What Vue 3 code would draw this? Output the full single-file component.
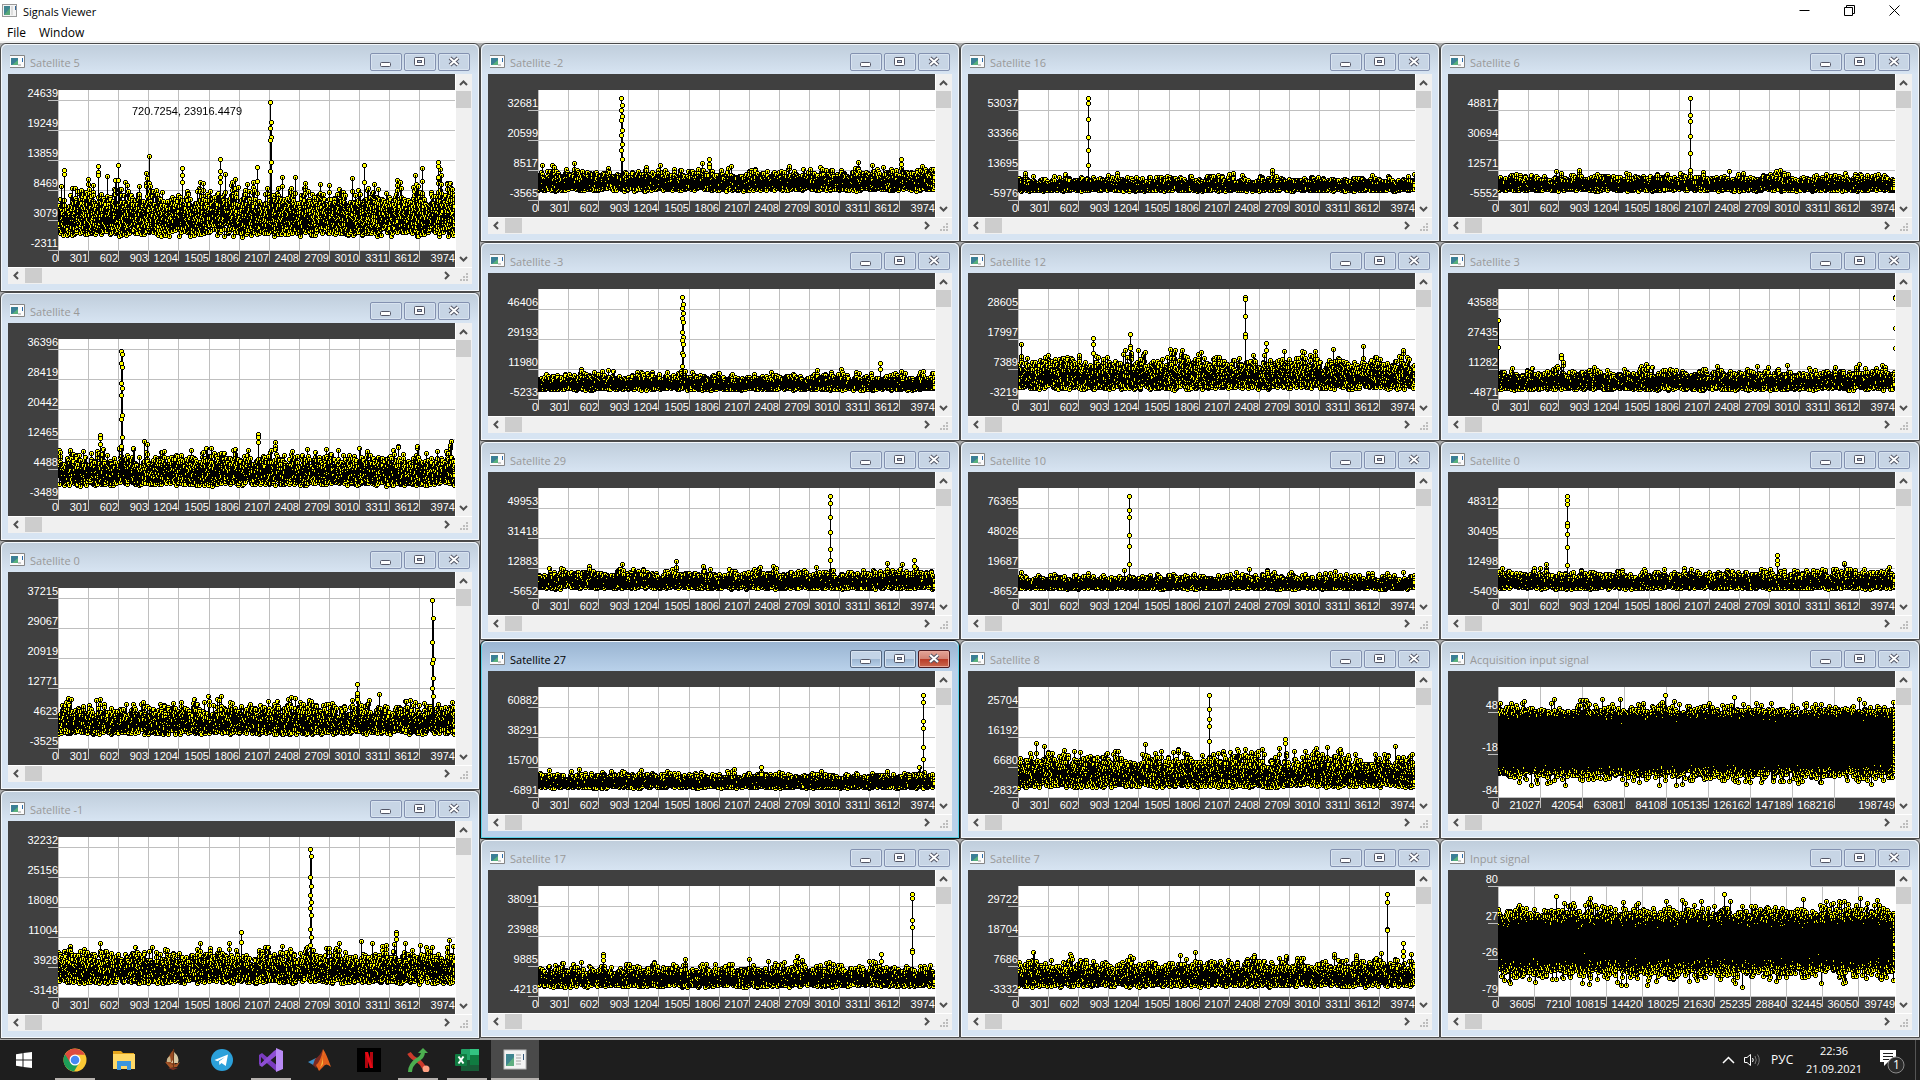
<script setup>
import { onBeforeUnmount, onMounted, ref } from 'vue'

const TALL = 193
const SHORT = 143

const satellite = (title, yLabels, spread, peaks, extra = {}) => ({
  title, yLabels, spread, peaks,
  step: 30, xStep: 301, xCount: 13, last: '3974', kind: 'noise',
  height: yLabels.length > 4 ? TALL : SHORT,
  floor: yLabels.length > 4 ? 13 : 9,
  ...extra,
})

// peaks: [x offset, marker heights above the axis]
const columns = [
  [
    satellite('Satellite 5', [-2311, 3079, 8469, 13859, 19249, 24639], 17,
      [[212, [148, 128, 122, 113, 110, 88, 79]], [162, [91, 79, 73, 68]], [6, [80, 76]], [40, [84, 78, 75]], [60, [85, 70]], [199, [83, 69]], [306, [85, 68]], [380, [88, 84, 73]], [124, [82, 75, 68]]],
      { note: '720.7254, 23916.4479' }),
    satellite('Satellite 4', [-3489, 4488, 12465, 20442, 28419, 36396], 11,
      [[63, [148, 145, 136, 132, 116, 111, 104, 84, 80, 62, 53]], [42, [64, 61, 55]], [200, [65, 62, 57]]]),
    satellite('Satellite 0', [-3525, 4623, 12771, 20919, 29067, 37215], 10.5,
      [[374, [148, 130, 106, 89, 85, 70, 60, 52]], [299, [64, 55, 49]]]),
    satellite('Satellite -1', [-3148, 3928, 11004, 18080, 25156, 32232], 11.5,
      [[252, [148, 141, 120, 111, 102, 95, 89, 82, 68, 60, 52]], [183, [65, 55]], [338, [65, 63, 58]]]),
  ],
  [
    satellite('Satellite -2', [-3565, 8517, 20599, 32681], 7.2,
      [[83, [102, 95, 90, 84, 80, 70, 65, 56, 50, 41]], [171, [41, 36, 33]], [363, [41, 36]]]),
    satellite('Satellite -3', [-5233, 11980, 29193, 46406], 5.3,
      [[144, [102, 95, 91, 86, 81, 77, 67, 62, 59, 55, 46, 44, 33]], [342, [36, 30]]]),
    satellite('Satellite 29', [-5652, 12883, 31418, 49953], 6.2,
      [[292, [102, 95, 81, 66, 49, 38]], [376, [38, 32]]]),
    satellite('Satellite 27', [-6891, 15700, 38291, 60882], 5,
      [[385, [102, 95, 76, 69, 50, 38]], [223, [30, 23]]], { active: true }),
    satellite('Satellite 17', [-4218, 9885, 23988, 38091], 7.4,
      [[374, [102, 98, 76, 69, 46, 44]], [65, [42, 40, 36]], [343, [42, 35]]]),
  ],
  [
    satellite('Satellite 16', [-5976, 13695, 33366, 53037], 4.6,
      [[70, [102, 97, 81, 63, 50, 35]]]),
    satellite('Satellite 12', [-3219, 7389, 17997, 28605], 11,
      [[227, [102, 100, 83, 65, 62]], [75, [61, 55, 46]], [112, [65, 53, 51]], [248, [56, 49]]]),
    satellite('Satellite 10', [-8652, 19687, 48026, 76365], 4.6,
      [[111, [102, 88, 81, 63, 52, 34]]]),
    satellite('Satellite 8', [-2832, 6680, 16192, 25704], 11.5,
      [[191, [102, 88, 78, 71, 56]], [267, [58, 54]]]),
    satellite('Satellite 7', [-3332, 7686, 18704, 29722], 9,
      [[369, [102, 94, 67, 66]], [385, [53, 45, 40]]]),
  ],
  [
    satellite('Satellite 6', [-5552, 12571, 30694, 48817], 5.3,
      [[192, [102, 85, 79, 64, 47, 30]]]),
    satellite('Satellite 3', [-4871, 11282, 27435, 43588], 7,
      [[0, [79, 52]], [397, [102, 101, 71, 51]], [63, [44, 41]]]),
    satellite('Satellite 0', [-5409, 12498, 30405, 48312], 6,
      [[69, [102, 98, 94, 75, 72, 64]], [69, [51, 33]], [279, [43, 38, 34]]]),
    satellite('Acquisition input signal', [-84, -18, 48], 10.5, [[167, [102]], [236, [100]]],
      { height: SHORT, step: 42, xStep: 21027, xCount: 9, last: '198749', kind: 'band', centre: 55, samples: 160000 }),
    satellite('Input signal', [-79, -26, 27, 80], 11.5, [[226, [102]], [58, [100]]],
      { step: 36, xStep: 3605, xCount: 11, last: '39749', kind: 'band', centre: 54, samples: 40000 }),
  ],
]

const LEFT = 50
const TOP = 16
const axisY = (w) => w.height - 17
const tickX = (w, i) => LEFT + Math.round(i * (w.step === 30 ? 30.1 : w.step))
const tickY = (w, i) => axisY(w) - Math.round(i * (w.step === 36 ? 36.7 : w.step === 42 ? 42.5 : 30))

function generator(seed) {
  let s = seed
  const uniform = () => {
    s = (s + 0x6d2b79f5) | 0
    let t = Math.imul(s ^ (s >>> 15), 1 | s)
    t = (t + Math.imul(t ^ (t >>> 7), 61 | t)) ^ t
    return ((t ^ (t >>> 14)) >>> 0) / 4294967296
  }
  return () => Math.sqrt(-2 * Math.log(uniform() + 1e-9)) * Math.cos(6.2831853 * uniform())
}

function draw(canvas, w, seed) {
  const width = canvas.parentElement.clientWidth
  canvas.width = width
  canvas.height = w.height
  const g = canvas.getContext('2d')
  const base = axisY(w)
  const normal = generator(seed)
  g.beginPath()
  g.rect(LEFT, TOP, width - LEFT, base - TOP)
  g.clip()

  const marker = (x, y) => {
    g.fillStyle = '#000'
    g.fillRect(x - 1, y - 2, 3, 5)
    g.fillRect(x - 2, y - 1, 5, 3)
    g.fillStyle = '#ff0'
    g.fillRect(x - 1, y - 1, 3, 3)
  }
  const stroke = (x, a, b) => {
    g.fillStyle = '#000'
    g.fillRect(x, Math.min(a, b), 1, Math.abs(a - b) + 1)
  }

  const count = w.kind === 'band' ? w.samples : 4000
  const span = width - LEFT
  const walk = [normal(), normal()]
  let previous = null
  for (let i = 0; i < count; i++) {
    const x = LEFT + Math.floor((i / count) * span)
    let h
    if (w.kind === 'band') {
      h = w.centre + w.spread * Math.max(-4.1, Math.min(4.1, normal()))
    } else {
      walk[0] = walk[0] * 0.6 + normal() * 0.8
      walk[1] = walk[1] * 0.6 + normal() * 0.8
      h = w.floor + w.spread * Math.hypot(walk[0], walk[1])
    }
    const y = Math.round(base - h)
    if (previous !== null) stroke(x, previous, y)
    marker(x, y)
    previous = y
  }
  for (const [dx, heights] of w.peaks) {
    const x = LEFT + dx
    const wide = heights.length > 6
    const foot = base - (w.kind === 'band' ? w.centre : w.floor + w.spread)
    if (dx < 397) stroke(x, base - heights[0], Math.round(foot))
    if (wide) stroke(x + 1, base - heights[1], Math.round(foot))
    heights.forEach((h, k) => marker(x + (wide ? k % 2 : 0), base - h))
  }
}

const desk = ref(null)
let observer
function drawAll() {
  const flat = columns.flat()
  desk.value.querySelectorAll('canvas').forEach((c, i) => draw(c, flat[i], 17 + i * 101))
}
onMounted(() => {
  drawAll()
  observer = new ResizeObserver(drawAll)
  observer.observe(desk.value)
})
onBeforeUnmount(() => observer.disconnect())

const apps = [
  { id: 'chrome', name: 'Chrome', open: true },
  { id: 'files', name: 'Explorer' },
  { id: 'ship', name: 'Ship' },
  { id: 'telegram', name: 'Telegram' },
  { id: 'vs', name: 'Visual Studio', open: true },
  { id: 'matlab', name: 'Matlab' },
  { id: 'netflix', name: 'Netflix' },
  { id: 'xing', name: 'Plotter', open: true },
  { id: 'excel', name: 'Excel', open: true },
  { id: 'viewer', name: 'Signals Viewer', open: true, current: true },
]
</script>

<template>
  <div class="page">
    <header class="caption">
      <svg class="app-icon" width="16" height="14" viewBox="0 0 16 14">
        <rect x="0.5" y="0.5" width="14" height="12" fill="#f4f4f4" stroke="#999" />
        <rect x="2" y="2" width="6" height="9" fill="#3f8590" />
        <path d="M2 11L8 4V11Z" fill="#58a878" />
        <rect x="9" y="2" width="2" height="9" fill="#ddd" />
        <rect x="13" y="2" width="1" height="4" fill="#369" />
      </svg>
      <h1>Signals Viewer</h1>
      <div class="caption-buttons">
        <button aria-label="Minimize"><svg width="11" height="11"><path d="M0.5 5.5H10.5" stroke="#000" /></svg></button>
        <button aria-label="Restore">
          <svg width="11" height="11" fill="none" stroke="#000"><path d="M0.5 2.5H8.5V10.5H0.5ZM2.5 2.5V0.5H10.5V8.5H8.5" /></svg>
        </button>
        <button aria-label="Close"><svg width="11" height="11"><path d="M0.5 0.5L10.5 10.5M10.5 0.5L0.5 10.5" stroke="#000" /></svg></button>
      </div>
    </header>
    <nav class="menu">
      <button>File</button>
      <button>Window</button>
    </nav>

    <main ref="desk" class="desk">
      <div v-for="(column, c) in columns" :key="c" class="column">
        <section v-for="w in column" :key="w.title" class="window" :class="{ active: w.active }">
          <header class="bar">
            <svg class="app-icon" width="16" height="14" viewBox="0 0 16 14">
              <rect x="0" y="1" width="14" height="11" fill="#fbfbfb" />
              <path d="M0 0.5H14.5V12.5H0" fill="none" stroke="#858585" />
              <rect x="1" y="3" width="7" height="7" fill="#3b7f95" />
              <path d="M2 10L8 5V10Z" fill="#58b07c" />
              <rect x="8" y="9" width="3" height="2" fill="#ccc" />
              <rect x="12" y="3" width="1" height="4" fill="#2b6cab" />
            </svg>
            <h2>{{ w.title }}</h2>
            <div class="bar-buttons">
              <button aria-label="Minimize">
                <svg width="12" height="12"><rect x="0.5" y="6.5" width="10" height="4" rx="1" fill="#fff" stroke="#535666" /></svg>
              </button>
              <button aria-label="Maximize">
                <svg width="12" height="12" stroke="#535666"><rect x="0.5" y="1.5" width="10" height="8" rx="1" fill="#fff" /><rect x="3.5" y="4.5" width="4" height="2" fill="#b5c6dd" /></svg>
              </button>
              <button aria-label="Close" class="close">
                <svg width="12" height="12"><path d="M2 2L10 9M10 2L2 9" stroke="#535666" stroke-width="4" /><path d="M2 2L10 9M10 2L2 9" stroke="#fff" stroke-width="2" /></svg>
              </button>
            </div>
          </header>
          <div class="client">
            <div class="row">
              <figure class="chart">
                <svg width="100%" :height="w.height" shape-rendering="crispEdges">
                  <rect :x="LEFT" :y="TOP" width="100%" :height="axisY(w) - TOP" fill="#fff" />
                  <g fill="#bfbfbf">
                    <rect v-for="(l, i) in w.yLabels" :key="'h' + i" x="40" :y="tickY(w, i)" width="100%" height="1" />
                    <rect v-for="i in w.xCount" :key="'v' + i" :x="tickX(w, i - 1)" :y="TOP" width="1" :height="axisY(w) - TOP + 11" />
                  </g>
                  <g class="labels">
                    <text v-for="(l, i) in w.yLabels" :key="'y' + i" :x="LEFT" :y="tickY(w, i) - 3">{{ l }}</text>
                    <text v-for="i in w.xCount" :key="'x' + i" :x="tickX(w, i - 1)" :y="axisY(w) + 12">{{ (i - 1) * w.xStep }}</text>
                    <text x="100%" :y="axisY(w) + 12">{{ w.last }}</text>
                  </g>
                </svg>
                <canvas></canvas>
                <figcaption v-if="w.note">{{ w.note }}</figcaption>
              </figure>
              <div class="vscroll">
                <button aria-label="Scroll up"><svg width="9" height="6"><path d="M1 5L4.500 1.500L8 5" /></svg></button>
                <i></i>
                <button class="end" aria-label="Scroll down"><svg width="9" height="6"><path d="M1 1L4.500 4.500L8 1" /></svg></button>
              </div>
            </div>
            <div class="hscroll">
              <button aria-label="Scroll left"><svg width="6" height="9"><path d="M5 1L1.500 4.500L5 8" /></svg></button>
              <i></i>
              <button class="end" aria-label="Scroll right"><svg width="6" height="9"><path d="M1 1L4.500 4.500L1 8" /></svg></button>
              <svg class="grip" width="17" height="16" fill="#bdbdbd"><path d="M11 5h2v2h-2zM8 8h2v2h-2zM11 8h2v2h-2zM5 11h2v2h-2zM8 11h2v2h-2zM11 11h2v2h-2z" /></svg>
            </div>
          </div>
        </section>
      </div>
    </main>

    <footer class="taskbar">
      <button class="start" aria-label="Start">
        <svg width="16" height="16" fill="#fff"><path d="M0 2.200L6.500 1.300V7.500H0ZM7.500 1.100L16 0V7.500H7.500ZM0 8.500H6.500V14.700L0 13.800ZM7.500 8.500H16V16L7.500 14.900Z" /></svg>
      </button>
      <button v-for="a in apps" :key="a.id" class="task" :class="{ open: a.open, current: a.current }" :aria-label="a.name">
        <svg width="24" height="24" viewBox="0 0 24 24">
          <g v-if="a.id === 'chrome'">
            <circle cx="12" cy="12" r="11.500" fill="#fbc934" />
            <path d="M2 6.300A11.500 11.500 0 0 0 11 23.400L16 15L12 12Z" fill="#1c9e58" />
            <path d="M2 6.300A11.500 11.500 0 0 1 22 6.700H12L7.500 15Z" fill="#dd4b3e" />
            <circle cx="12" cy="12" r="5.500" fill="#fff" /><circle cx="12" cy="12" r="4.300" fill="#4688f4" />
          </g>
          <g v-else-if="a.id === 'files'">
            <path d="M1 3H9L11 5H22V21H1Z" fill="#e5a51c" /><path d="M1 6H23V21H1Z" fill="#ffd966" />
            <path d="M5 22V13H19V22H15V18H9V22Z" fill="#3a96dd" />
          </g>
          <g v-else-if="a.id === 'ship'">
            <path d="M13 1L14 17L5 15Q7 8 13 1Z" fill="#9a4c22" /><path d="M13 4Q19 9 17 15L10 15Q14 10 13 4Z" fill="#d8c9a4" />
            <path d="M9 8Q5 10 6 14L10 14Z" fill="#c9b48a" />
            <path d="M4 14L13 17L19 14L16 19L9 20Z" fill="#a85628" /><path d="M7 20L17 20L12 22Z" fill="#7d2d25" /><path d="M12.500 1V22" stroke="#6e3515" />
          </g>
          <g v-else-if="a.id === 'telegram'">
            <circle cx="12" cy="12" r="11" fill="#2ba0da" /><path d="M4.500 12L18 6.500L15.800 18L11.500 15L9.500 17L9 13.500L15 9L7.500 13.200Z" fill="#fff" />
          </g>
          <g v-else-if="a.id === 'vs'">
            <path d="M0 7L3 5L20 19L17 23L2 10V17L0 16Z" fill="#7b3bc0" /><path d="M0 17L3 19L18 7V1L15 3Z" fill="#8d4ed4" />
            <path d="M17 0L24 3V21L17 24Z" fill="#b98af5" /><path d="M2 9V15L5 12Z" fill="#1e1e1e" />
          </g>
          <g v-else-if="a.id === 'matlab'">
            <path d="M0 14L8 10L12 14L7 18Z" fill="#3d8fc9" /><path d="M7 11Q12 8 15 1L13 15L8 20L5 17Z" fill="#7a2a22" />
            <path d="M15 1Q18 5 23 19Q18 14 15 19L11 23L8 17Q13 13 15 1Z" fill="#e4611d" /><path d="M15 2Q16 10 12 20L15 16Z" fill="#f8b53c" />
          </g>
          <g v-else-if="a.id === 'netflix'">
            <rect width="24" height="24" fill="#000" /><path d="M8 4H11V20H8ZM13 4H16V20H13Z" fill="#b1060f" /><path d="M8 4H11L16 20H13Z" fill="#e50914" />
          </g>
          <g v-else-if="a.id === 'xing'" fill="none" stroke-width="4">
            <path d="M3 5Q6 10 11 12Q16 15 18 20" stroke="#cc3a2c" /><path d="M4 24Q4 17 11 12Q17 9 17 4" stroke="#4caf50" />
            <path d="M12 5L17 0L22 5Z" fill="#4caf50" stroke="none" /><circle cx="20" cy="21" r="3.500" fill="#ffa183" stroke="none" />
          </g>
          <g v-else-if="a.id === 'excel'">
            <rect x="6" y="1" width="18" height="22" rx="1" fill="#21a366" /><path d="M15 1H24V7H15Z" fill="#33c481" /><path d="M6 12H24V23H6Z" fill="#185c37" /><path d="M15 7H24V17H15Z" fill="#107c41" />
            <rect y="6" width="12" height="12" rx="1" fill="#107c41" /><path d="M3.500 8.500L8.500 15.500M8.500 8.500L3.500 15.500" stroke="#fff" stroke-width="2" />
          </g>
          <g v-else>
            <rect x="1" y="2" width="22" height="19" fill="#f3f3f3" stroke="#bbb" /><rect x="3" y="6" width="8" height="12" fill="#3f8590" /><path d="M3 18L11 9V18Z" fill="#5fae80" />
            <path d="M13 7H18M13 10H18M13 13H18M13 16H18" stroke="#ccc" stroke-width="2" /><rect x="20" y="6" width="1" height="6" fill="#357" />
          </g>
        </svg>
      </button>
      <div class="tray">
        <button class="chevron" aria-label="Hidden icons"><svg width="13" height="8" fill="none" stroke="#fff" stroke-width="1.500"><path d="M1 7L6.500 1.500L12 7" /></svg></button>
        <button class="sound" aria-label="Volume">
          <svg width="17" height="14" fill="none" stroke="#fff"><path d="M0.500 4.500H3L6.500 1.500V12.500L3 9.500H0.500Z" /><path d="M8.500 5Q10 7 8.500 9" /><path d="M11 3Q13.500 7 11 11M13.500 1.500Q17 7 13.500 12.500" stroke="#777" /></svg>
        </button>
        <span class="lang">РУС</span>
        <time class="clock"><span>22:36</span><span>21.09.2021</span></time>
        <button class="notes" aria-label="Notifications">
          <svg width="26" height="26"><path d="M1 2H17V14H9L5 18V14H1Z" fill="#fff" /><path d="M4 5.500H14M4 8.500H14M4 11.500H10" stroke="#1e1e1e" /><circle cx="17" cy="17" r="8" fill="#2b2b2b" stroke="#8a8a8a" /></svg>
          <b>1</b>
        </button>
        <i class="peek"></i>
      </div>
    </footer>
  </div>
</template>

<style>
body { background: #fff; }
</style>

<style scoped>
.page {
  min-height: 100vh;
  display: flex;
  flex-direction: column;
  font-family: "Open Sans", "Noto Sans", sans-serif;
  font-size: 11px;
  line-height: 16px;
  color: #000;
}
button {
  border: 0;
  margin: 0;
  padding: 0;
  background: none;
  font: inherit;
  color: inherit;
}
svg { display: block; }
h1, h2 { margin: 0; font-size: 11px; font-weight: 400; white-space: nowrap; }
.caption { display: flex; height: 24px; padding: 0 3px 0 2px; }
.caption .app-icon { margin-top: 4px; }
.caption h1 { margin: 4px 0 0 5px; }
.caption-buttons { display: flex; margin-left: auto; }
.caption-buttons button {
  width: 45px;
  height: 20px;
  display: flex;
  align-items: center;
  justify-content: center;
}
.menu { display: flex; gap: 13px; height: 17px; padding: 0 7px; border-bottom: 2px solid #f0f0f0; font-size: 12px; }
.menu button { height: 17px; line-height: 17px; }

.desk {
  flex: 1;
  display: grid;
  grid-template-columns: repeat(4, minmax(0, 1fr));
  background: #ababab;
}
.window {
  border: 1px solid #4a4a4a;
  border-radius: 6px 6px 0 0;
  background: #d7e4f2;
  box-shadow: inset 0 0 0 1px #f4f8fc;
  padding: 0 7px 7px;
}
.window.active { background: #b9d1ea; border-color: #111; box-shadow: inset 0 0 0 1px #5ad3e8; }
.bar {
  display: flex;
  height: 30px;
  margin: 0 -6px;
  padding: 0 8px;
  background: linear-gradient(#bfcddb, #d7e4f2);
  border-radius: 5px 5px 0 0;
  color: #999;
  box-shadow: inset 0 1px #f4f8fc;
}
.active .bar { background: linear-gradient(#99b4d1, #b9d1ea); color: #000; }
.bar .app-icon { margin-top: 11px; }
.bar h2 { margin: 11px 0 0 4px; }
.bar-buttons { display: flex; gap: 2px; margin: 9px 0 0 auto; }
.bar-buttons button {
  width: 32px;
  height: 18px;
  display: flex;
  align-items: center;
  justify-content: center;
  border: 1px solid #8391b0;
  border-radius: 2px;
  background: #c7d5e5;
  box-shadow: inset 0 0 0 1px #d8e3f0;
}
.active .bar-buttons button {
  border-color: #53657f;
  background: linear-gradient(#c3d4e7 50%, #9cb5d1 50%, #b9d1ea);
}
.active .bar-buttons .close {
  border-color: #4c1a20;
  background: linear-gradient(#e3a497, #d28273 50%, #b93a26 50%, #c9684f);
  box-shadow: inset 0 0 0 1px #e8a99c;
}
.client { background: #f0f0f0; }
.row { display: flex; }
.chart {
  flex: 1;
  min-width: 0;
  margin: 0;
  position: relative;
  background: #404040;
}
.chart canvas { position: absolute; left: 0; top: 0; }
.chart figcaption {
  position: absolute;
  left: 124px;
  top: 29px;
  font: 11px/16px "Liberation Sans", sans-serif;
}
.labels { font: 11px "Liberation Sans", sans-serif; fill: #fff; text-anchor: end; }
.vscroll {
  width: 16px;
  display: flex;
  flex-direction: column;
  border-left: 1px solid #fff;
}
.vscroll button, .hscroll button {
  width: 15px;
  height: 17px;
  display: flex;
  align-items: center;
  justify-content: center;
  fill: none;
  stroke: #505050;
  stroke-width: 2;
}
.hscroll button { width: 16px; height: 15px; }
.vscroll i { height: 17px; margin-right: 1px; background: #cdcdcd; }
.vscroll .end { margin-top: auto; }
.hscroll { height: 16px; display: flex; border-top: 1px solid #fff; }
.hscroll i { width: 17px; margin-left: 1px; height: 15px; background: #cdcdcd; }
.hscroll .end { margin-left: auto; }

.taskbar { height: 40px; display: flex; background: #1e1e1e; color: #fff; }
.start { width: 48px; margin-right: 2px; display: flex; align-items: center; justify-content: center; }
.task {
  width: 49px;
  display: flex;
  align-items: center;
  justify-content: center;
  position: relative;
}
.task.open::after {
  content: "";
  position: absolute;
  left: 5px;
  right: 4px;
  bottom: 0;
  height: 2px;
  background: #b5b1ae;
}
.task.current { width: 48px; background: #4a4a4a; }
.task.current::after { left: 0; right: 0; }
.tray { display: flex; align-items: center; margin-left: auto; }
.chevron { margin-right: 9px; }
.sound { margin-right: 10px; }
.lang { width: 24px; margin-right: 9px; font-size: 12px; }
.clock { width: 60px; display: flex; flex-direction: column; align-items: center; line-height: 18px; }
.notes { position: relative; margin: 2px 0 0 15px; }
.notes b { position: absolute; left: 14px; top: 9px; font-weight: 400; font-size: 12px; }
.peek { width: 4px; height: 40px; margin-left: 10px; border-left: 1px solid #555; }
</style>
